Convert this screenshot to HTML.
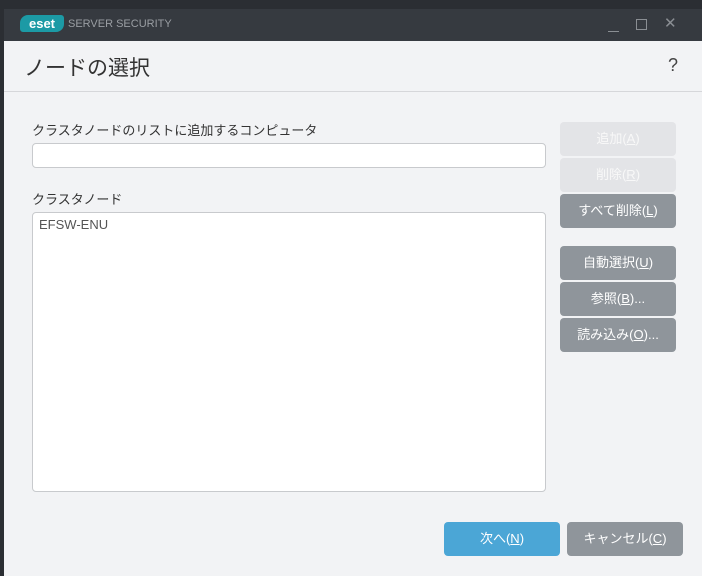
<!DOCTYPE html>
<html><head><meta charset="utf-8"><style>
*{margin:0;padding:0;box-sizing:border-box}
body{width:702px;height:576px;overflow:hidden;background:#2b2e33;font-family:"Liberation Sans","Noto Sans CJK JP",sans-serif;position:relative}
.tb{position:absolute;left:4px;top:9px;right:0;height:32px;background:#363a40}
.main{position:absolute;left:4px;top:41px;right:0;bottom:0;background:#f2f3f5}
.abs{position:absolute}
.btn{position:absolute;left:556px;width:116px;height:34px;border-radius:4px;background:#8f959b;color:#fff;font-size:13px;text-align:center;line-height:34px}
.dis{background:#e3e4e7;color:#f8f8f8}
u{text-decoration:underline}
</style></head><body>
<div class="tb">
 <div class="abs" style="left:16px;top:6px;width:44px;height:17px;background:#1c9aa5;border-radius:8px 3px 8px 3px;color:#fff;font-weight:bold;font-size:13px;line-height:17px;text-align:center">eset</div>
 <div class="abs" style="left:64px;top:9px;color:#9a9ea3;font-size:11px">SERVER SECURITY</div>
 <div class="abs" style="left:604px;top:22px;width:11px;height:1px;background:#8a8e93"></div>
 <div class="abs" style="left:632px;top:10px;width:11px;height:11px;border:1px solid #8a8e93"></div>
 <div class="abs" style="left:660px;top:5px;color:#8a8e93;font-size:15px">✕</div>
</div>
<div class="main">
 <div class="abs" style="left:20px;top:11px;font-size:21px;color:#333">ノードの選択</div>
 <div class="abs" style="left:664px;top:14px;font-size:18px;color:#444">?</div>
 <div class="abs" style="left:0;right:0;top:50px;height:1px;background:#d6d7da"></div>
 <div class="abs" style="left:28px;top:79px;font-size:13px;color:#333">クラスタノードのリストに追加するコンピュータ</div>
 <div class="abs" style="left:28px;top:102px;width:514px;height:25px;background:#fff;border:1px solid #c8cacd;border-radius:4px"></div>
 <div class="abs" style="left:28px;top:148px;font-size:13px;color:#333">クラスタノード</div>
 <div class="abs" style="left:28px;top:171px;width:514px;height:280px;background:#fff;border:1px solid #c8cacd;border-radius:4px;padding:4px 6px;font-size:13px;color:#555">EFSW-ENU</div>
 <div class="btn dis" style="top:81px">追加(<u>A</u>)</div>
 <div class="btn dis" style="top:117px">削除(<u>R</u>)</div>
 <div class="btn" style="top:153px">すべて削除(<u>L</u>)</div>
 <div class="btn" style="top:205px">自動選択(<u>U</u>)</div>
 <div class="btn" style="top:241px">参照(<u>B</u>)...</div>
 <div class="btn" style="top:277px">読み込み(<u>O</u>)...</div>
 <div class="btn" style="left:440px;top:481px;background:#4ba6d6">次へ(<u>N</u>)</div>
 <div class="btn" style="left:563px;top:481px">キャンセル(<u>C</u>)</div>
</div>
</body></html>
